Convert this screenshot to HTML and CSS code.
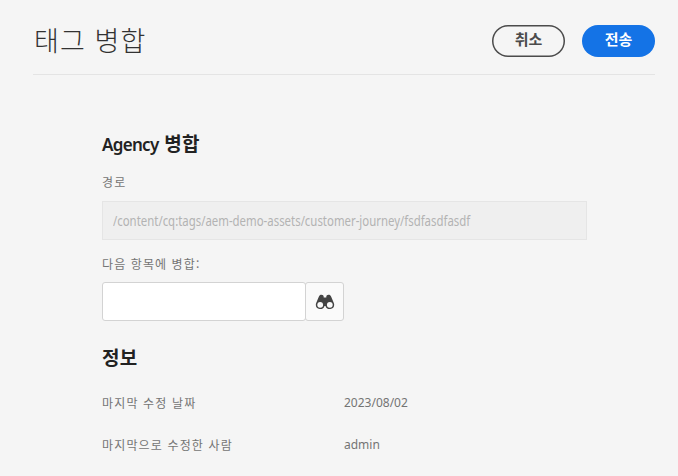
FILE: index.html
```html
<!DOCTYPE html>
<html lang="ko">
<head>
<meta charset="utf-8">
<title>태그 병합</title>
<link rel="stylesheet" href="styles.css">
</head>
<body>
<header class="header">
  <h1 class="title">태그 병합</h1>
  <div class="actions">
    <button class="button" type="button"><span>취소</span></button>
    <button class="button primary" type="button"><span>전송</span></button>
  </div>
</header>
<main class="content">
  <h2 class="heading"><span class="latin">Agency</span> 병합</h2>
  <label class="label path-label">경로</label>
  <div class="path"><span class="path-text">/content/cq:tags/aem-demo-assets/customer-journey/fsdfasdfasdf</span></div>
  <label class="label merge-label" for="target">다음 항목에 병합:</label>
  <div class="picker">
    <input class="input" id="target" type="text">
    <button class="browse" type="button" aria-label="찾아보기">
      <svg width="20" height="16" viewBox="0 0 20 16">
        <path fill="#444" d="M3.700 2.900C4.300 1.300 5.200.7 6.500.7c1.300 0 2.200.7 2.200 2v.9h2.600v-.9c0-1.300.9-2 2.200-2 1.300 0 2.200.6 2.800 2.200l2.200 5.300c.4.8.7 1.500.7 2.500a4.450 4.450 0 0 1-8.700 1.200h-1A4.450 4.450 0 0 1 .8 10.700c0-1 .3-1.700.7-2.500z"/>
        <circle cx="5.200" cy="10.800" r="2.900" fill="#fafafa"/>
        <circle cx="14.800" cy="10.800" r="2.900" fill="#fafafa"/>
      </svg>
    </button>
  </div>
  <h2 class="heading info-heading">정보</h2>
  <dl class="details">
    <dt>마지막 수정 날짜</dt><dd>2023/08/02</dd>
    <dt>마지막으로 수정한 사람</dt><dd>admin</dd>
  </dl>
</main>
</body>
</html>
```

FILE: styles.css
```css
* { box-sizing: border-box; }

body {
  margin: 0;
  height: 476px;
  overflow: hidden;
  background: #f5f5f5;
  color: #747474;
  font-family: "Noto Sans CJK KR", sans-serif;
}

.header {
  display: flex;
  justify-content: space-between;
  height: 75px;
  margin: 0 23px 0 33px;
  border-bottom: 1px solid #e4e4e4;
}

.title {
  margin: 20px 0 0 1px;
  color: #323232;
  font-size: 27px;
  font-weight: 300;
  line-height: 40px;
  letter-spacing: 1.1px;
  white-space: nowrap;
}

.actions {
  display: flex;
  gap: 17px;
  padding-top: 25px;
}

.button {
  width: 73px;
  height: 32px;
  padding: 0 0 4px;
  border: 0;
  border-radius: 16px;
  background: transparent;
  box-shadow: inset 0 0 0 1.5px #4b4b4b;
  color: #4b4b4b;
  font: 700 15px/22px "Noto Sans CJK KR", sans-serif;
}

.primary {
  background: #1473e6;
  box-shadow: none;
  color: #fff;
}

.content {
  width: 485px;
  margin: 56px 0 0 102px;
}

.heading {
  height: 24px;
  margin: 0;
  color: #222;
  font-size: 19px;
  font-weight: 700;
  line-height: 24px;
  letter-spacing: 0.3px;
}

.latin {
  font-family: "Noto Sans", sans-serif;
  font-size: 17px;
  font-weight: 600;
  line-height: 20px;
  letter-spacing: -0.7px;
}

.label {
  display: block;
  font-size: 12px;
  line-height: 18px;
  letter-spacing: 1.1px;
}

.path-label { margin-top: 18px; }

.path {
  height: 39px;
  margin-top: 10px;
  padding-left: 10px;
  border: 1px solid #e5e5e5;
  background: #efefef;
  color: #b3b3b3;
  font-family: "Noto Sans", sans-serif;
  font-size: 13.5px;
  line-height: 38px;
  white-space: nowrap;
}

.path-text {
  display: inline-block;
  transform: scaleX(0.845);
  transform-origin: left;
}

.merge-label { margin-top: 15px; }

.picker {
  display: flex;
  margin-top: 9px;
}

.input {
  width: 204px;
  height: 39px;
  padding: 0 10px;
  border: 1px solid #d3d3d3;
  border-radius: 3px;
  background: #fff;
}

.browse {
  display: grid;
  place-items: center;
  width: 39px;
  height: 39px;
  margin-left: -1px;
  padding: 0;
  border: 1px solid #d3d3d3;
  border-radius: 3px;
  background: #fafafa;
}

.info-heading { margin-top: 24px; }

.details {
  display: grid;
  grid-template-columns: 242px 1fr;
  row-gap: 24px;
  margin: 25px 0 0;
  font-size: 12px;
  line-height: 18px;
}

.details dt { letter-spacing: 1.15px; }

.details dd {
  margin: 0;
  font-family: "Noto Sans", sans-serif;
}
```
